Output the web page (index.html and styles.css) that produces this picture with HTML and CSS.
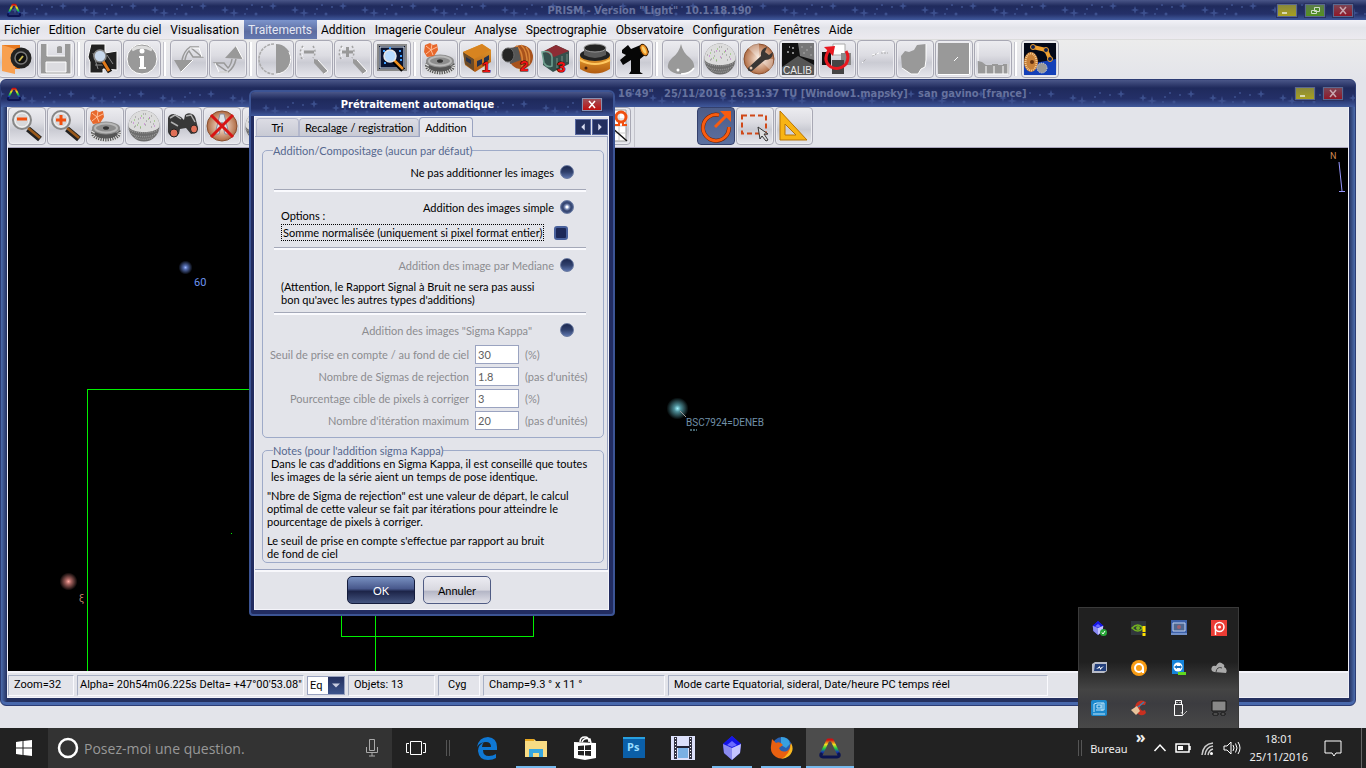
FILE: index.html
```html
<!DOCTYPE html>
<html lang="fr">
<head>
    <meta charset="UTF-8">
    <meta name="viewport" content="width=device-width, initial-scale=1.0">
    <title>PRISM</title>
    <link rel="stylesheet" href="styles.css">
</head>
<body>
    <!-- Symboles partagés -->
    <svg class="symbols" aria-hidden="true">
        <defs>
            <linearGradient id="rainbow" x1="0" y1="0" x2="0" y2="1">
                <stop offset="0" stop-color="#d01010"/><stop offset=".3" stop-color="#f0e020"/>
                <stop offset=".55" stop-color="#20d040"/><stop offset=".8" stop-color="#1838b0"/>
                <stop offset="1" stop-color="#0c1450"/>
            </linearGradient>
            <linearGradient id="orange" x1="0" y1="0" x2="0" y2="1">
                <stop offset="0" stop-color="#e8a030"/><stop offset="1" stop-color="#b05a10"/>
            </linearGradient>
            <radialGradient id="copper">
                <stop offset="0" stop-color="#fff0e4"/><stop offset="1" stop-color="#b06c44"/>
            </radialGradient>
            <radialGradient id="starBlue">
                <stop offset="0" stop-color="#9ab4ff"/><stop offset=".3" stop-color="#5068a8"/><stop offset="1" stop-color="#000"/>
            </radialGradient>
            <radialGradient id="starRed">
                <stop offset="0" stop-color="#ffa8a0"/><stop offset=".3" stop-color="#a86460"/><stop offset="1" stop-color="#000"/>
            </radialGradient>
            <radialGradient id="starCyan">
                <stop offset="0" stop-color="#a0f4ff"/><stop offset=".3" stop-color="#4c8c96"/><stop offset="1" stop-color="#000"/>
            </radialGradient>
        </defs>
        <symbol id="prism" viewBox="0 0 24 24">
            <path d="M3 19L10 4h4l7 15" fill="none" stroke="url(#rainbow)" stroke-width="3" stroke-linejoin="round"/>
            <path d="M3 18q-1 3 2 3h14q3 0 2-3" fill="none" stroke="#0c1450" stroke-width="3" stroke-linecap="round"/>
        </symbol>
        <symbol id="sphere" viewBox="0 0 32 32">
            <circle cx="16" cy="16" r="15.500" fill="#6c6c6c"/>
            <path d="M.5 16a15.500 15.500 0 0 1 31 0c-2 8-29 8-31 0z" fill="#dcdcdc"/>
            <path d="M3 12h1m3-5h1m2 6h1m4-9h1m2 7h1m4-5h1m1 8h1m-9 1h1m-12 2h1m5 1h1m10-1h1M7 16h1m7-8h1m-6 1h1m11 3h1m-6-8h1m3 4h1" stroke="#888"/>
            <path d="M6 10h1m5 7h1m7-8h1m5 2h1M13 6h1m-5 9h1" stroke="#7ac050"/>
            <path d="M16 14h1m4-6h1m4 8h1M5 13h1m6-5h1" stroke="#c060d0"/>
            <path d="M1 19c4 5 26 5 30 0M3 23c5 5 21 5 26 0M7 27c4 3 14 3 18 0" fill="none" stroke="#999" stroke-width="1.500" stroke-dasharray="1 1"/>
        </symbol>
        <symbol id="gears" viewBox="0 0 32 32">
            <ellipse cx="17" cy="23" rx="15" ry="8.500" fill="#555"/>
            <ellipse cx="17" cy="24" rx="13.500" ry="6.500" fill="none" stroke="#ddd" stroke-width="4" stroke-dasharray="1.200 1.200"/>
            <ellipse cx="17" cy="18" rx="14" ry="6.500" fill="#8c8c8c"/>
            <ellipse cx="17" cy="18" rx="11" ry="4.500" fill="none" stroke="#b8b8b8" stroke-width="2"/>
            <ellipse cx="17" cy="18" rx="3" ry="1.800" fill="#333"/>
            <path d="M2 2l5-2 3 2 4-1 1 6-4 6-7 1-3-5z" fill="#e8682c"/>
            <path d="M8 7L3 3m5 4l1-6m-1 6l6-3M8 7l-5 4m5-4l2 5" stroke="#ffc09a" fill="none"/>
        </symbol>
        <symbol id="handle" viewBox="0 0 32 32">
            <path d="M17 19l12 10" stroke="#222" stroke-width="6"/>
            <path d="M17 18l12 10" stroke="#9a5a1c" stroke-width="2.500"/>
            <circle cx="11" cy="10" r="9" fill="#d8d8da" stroke="#888" stroke-width="2"/>
            <circle cx="11" cy="10" r="7" fill="none" stroke="#f6f6f6" stroke-width="1"/>
        </symbol>
        <symbol id="ghostglass" viewBox="0 0 32 32">
            <path d="M16 16l4 1 10 11-4 3-10-11z" fill="#999"/>
            <path d="M20 17l10 11-4 3" fill="none" stroke="#fff"/>
            <path d="M5 3Q0 9 4 16M15 3q4 6 0 12" fill="none" stroke="#a4a4a4" stroke-width="1.500" stroke-dasharray="2 2"/>
            <path d="M6 4Q2 9 6 16" fill="none" stroke="#fff" stroke-dasharray="2 2"/>
        </symbol>
        <symbol id="cube" viewBox="0 0 24 24">
            <path d="M12 0l9 8-1 9-8 7-8-7-1-9z" fill="#3030d8"/>
            <path d="M12 0l9 8-9 4-9-4z" fill="#1414e8"/>
            <path d="M3 8l9 4v12l-8-7z" fill="#8c8cf0"/>
            <path d="M21 8l-9 4v12l8-7z" fill="#c4c4ff"/>
            <path d="M12 5l5 4-5 2-5-2z" fill="#6a6aff"/>
        </symbol>
    </svg>

    <!-- Barre de titre -->
    <header class="titlebar app-title">
        <svg class="app-icon"><use href="#prism"/></svg>
        <span class="title-text">PRISM - Version "Light" &nbsp;10.1.18.190</span>
        <div class="win-buttons">
            <button class="win-btn yellow" aria-label="Réduire"><svg viewBox="0 0 18 11"><path d="M4 8h5" stroke="#d8d8b0" stroke-width="2"/></svg></button>
            <button class="win-btn green" aria-label="Restaurer"><svg viewBox="0 0 18 11"><path d="M8.500 2.500h5v4h-5zM5.500 5.500h5v3h-5z" fill="#4c8a2a" stroke="#d0dcc8"/></svg></button>
            <button class="win-btn red" aria-label="Fermer"><svg viewBox="0 0 18 11"><path d="M6 2l6 7M12 2l-6 7" stroke="#c8a8b0" stroke-width="1.500"/></svg></button>
        </div>
    </header>

    <!-- Menu -->
    <nav class="menu">
        <a href="#">Fichier</a>
        <a href="#">Edition</a>
        <a href="#">Carte du ciel</a>
        <a href="#">Visualisation</a>
        <a href="#" class="current">Traitements</a>
        <a href="#">Addition</a>
        <a href="#">Imagerie Couleur</a>
        <a href="#">Analyse</a>
        <a href="#">Spectrographie</a>
        <a href="#">Observatoire</a>
        <a href="#">Configuration</a>
        <a href="#">Fenêtres</a>
        <a href="#">Aide</a>
    </nav>

    <!-- Barre d'outils principale -->
    <div class="toolbar">
        <div class="group">
            <button class="tool" aria-label="Ouvrir"><svg viewBox="0 0 32 32"><path d="M1 2h18v24H1z" fill="#e87a20"/><path d="M1 2l13 4v25L1 28z" fill="#f8a050"/><circle cx="20" cy="15" r="10.500" fill="#222"/><circle cx="20" cy="15" r="6" fill="#111" stroke="#777" stroke-width="1.500"/><path d="M18 18l4-5" stroke="#c8b850" stroke-width="2"/></svg></button>
            <button class="tool" aria-label="Enregistrer"><svg viewBox="0 0 32 32"><path d="M1 1h6v12h18V1h6v30H1z" fill="#999"/><path d="M6 19h20v10H6z" fill="#dcdce0" stroke="#fff"/><path d="M17 4q3-2 5 0v6h-5z" fill="#999"/><path d="M7 1v12h18M31 1v30H1" fill="none" stroke="#fff"/></svg></button>
        </div>
        <div class="group">
            <button class="tool" aria-label="Chercher"><svg viewBox="0 0 32 32"><path d="M4 1h14v9l12-2v19l-14-1v4H3V19l-2-5z" fill="#222" stroke="#fff"/><path d="M6 10l5 16M20 12l6 9M8 22h9" stroke="#888"/><path d="M16 18l7 11" stroke="#111" stroke-width="5"/><path d="M16 18l6 10" stroke="#e07818" stroke-width="3"/><circle cx="13" cy="13" r="6" fill="#c8d8ec" stroke="#888" stroke-width="1.500"/></svg></button>
            <button class="tool" aria-label="Informations"><svg viewBox="0 0 32 32"><circle cx="16" cy="16" r="15" fill="#999" stroke="#fff"/><path d="M6 7q9-6 20 0" fill="none" stroke="#ddd" stroke-width="3"/><circle cx="16" cy="8" r="2.500" fill="#fff"/><path d="M13 13h5v11h2v2h-7v-2h1v-9h-1z" fill="#fff"/></svg></button>
        </div>
        <div class="group">
            <button class="tool" aria-label="Annuler"><svg viewBox="0 0 32 32"><path d="M1 17h19L8 29z" fill="#999"/><path d="M9 17q2-9 8-13l12 10h-9l-4-6q-3 3-4 9M17 4h9" fill="none" stroke="#999" stroke-width="1.500"/><path d="M20 17L8 29m9-24h9l3 9" fill="none" stroke="#fff"/></svg></button>
            <button class="tool" aria-label="Rétablir"><svg viewBox="0 0 32 32"><path d="M13 15L24 3l7 13z" fill="#999"/><path d="M24 16q-2 9-8 13L3 20h9l4 5q3-3 4-9M15 29H7" fill="none" stroke="#999" stroke-width="1.500"/><path d="M24 3l7 13M3 20l4 9h9" fill="none" stroke="#fff"/></svg></button>
        </div>
        <div class="group">
            <button class="tool" aria-label="Contraste"><svg viewBox="0 0 32 32"><path d="M17 1a15 15 0 0 1 0 30z" fill="#999"/><path d="M15 1a15 15 0 0 0 0 30" fill="none" stroke="#aaa" stroke-width="1.500" stroke-dasharray="3 1"/><path d="M17 31a15 15 0 0 0 13-22" fill="none" stroke="#fff"/></svg></button>
            <button class="tool" aria-label="Zoom arrière"><svg viewBox="0 0 32 32"><use href="#ghostglass"/><path d="M6 9h10" stroke="#999" stroke-width="3"/></svg></button>
            <button class="tool" aria-label="Zoom avant"><svg viewBox="0 0 32 32"><use href="#ghostglass"/><path d="M5 9h11M10.500 4v10" stroke="#999" stroke-width="3"/></svg></button>
            <button class="tool" aria-label="Zoom ciel"><svg viewBox="0 0 32 32"><path d="M2 2h28v25H2z" fill="#0a1430" stroke="#888" stroke-width="2"/><path d="M4 4h24v21H4z" fill="none" stroke="#dfe8f0"/><path d="M7 8h2m4-3h2m8 3h2m-1 5h2M8 20h2m14-3h2" stroke="#40a0ff" stroke-width="2"/><path d="M18 18l9 9" stroke="#000" stroke-width="5"/><path d="M18 17l9 9" stroke="#f09020" stroke-width="2.500"/><circle cx="14" cy="13" r="6" fill="#b8dcff" stroke="#e8e8e8" stroke-width="1.500"/></svg></button>
        </div>
        <div class="group">
            <button class="tool" aria-label="Prétraitement"><svg><use href="#gears"/></svg></button>
            <button class="tool" aria-label="Caméra 1"><svg viewBox="0 0 32 32"><path d="M1 9L20 1l9 6v12L13 29 3 22z" fill="url(#orange)"/><path d="M1 9l11 7v12L3 21z" fill="#6a4a28"/><path d="M1 9L20 1l9 6-17 9z" fill="#d88420"/><path d="M4 14l5 3v4l-5-3zM15 18l5-2v5l-5 3zM22 15l5-3v5l-5 3z" fill="#26324c"/><text x="20" y="29" class="cam-number">1</text></svg></button>
            <button class="tool" aria-label="Caméra 2"><svg viewBox="0 0 32 32"><circle cx="20" cy="14" r="12" fill="#a8521c"/><path d="M15 3q8 5 6 22M20 2q7 6 6 21M25 4q5 6 3 17" fill="none" stroke="#d88438" stroke-width="1.500"/><path d="M6 5l11-1 3 13-11 4z" fill="#555"/><ellipse cx="7" cy="12" rx="6" ry="7" fill="#252525" stroke="#686868"/><text x="19" y="28" class="cam-number">2</text></svg></button>
            <button class="tool" aria-label="Caméra 3"><svg viewBox="0 0 32 32"><path d="M3 9L16 2l13 6v13l-16 8-10-7z" fill="#34504c"/><path d="M4 8l12-6 13 6-15 6z" fill="#8c2c34"/><path d="M2 9q9-2 10 5v9q-5 2-8-3z" fill="none" stroke="#70a090" stroke-width="1.500"/><path d="M17 15v10m5-12v10m5-12v8" stroke="#7a9088"/><text x="17" y="29" class="cam-number">3</text></svg></button>
            <button class="tool" aria-label="Roue à filtres"><svg viewBox="0 0 32 32"><path d="M1 12h30v14q-15 9-30 0z" fill="url(#orange)"/><path d="M1 17q15 8 30 0" fill="none" stroke="#ffc860" stroke-width="2"/><ellipse cx="16" cy="12" rx="15" ry="6" fill="#222"/><path d="M5 4h22v8q-11 6-22 0z" fill="#5a5a5a"/><ellipse cx="16" cy="5" rx="11" ry="4" fill="#222" stroke="#999"/><circle cx="7" cy="25" r="1.500" fill="#421"/></svg></button>
            <button class="tool" aria-label="Télescope"><svg viewBox="0 0 32 32"><path d="M4 7l6-5 3 4 12-5 6 8-9 7v13l3 2H11l2-3V17l-8 5-3-5 6-5-4-2z" fill="#060606"/><ellipse cx="26" cy="7" rx="3.500" ry="6" transform="rotate(-25 26 7)" fill="#f09020" stroke="#3c2000"/><ellipse cx="26" cy="7" rx="1.500" ry="4" transform="rotate(-25 26 7)" fill="#f8d070"/></svg></button>
        </div>
        <div class="group">
            <button class="tool" aria-label="Goutte"><svg viewBox="0 0 32 32"><path d="M16 1q2 9 9 14 5 5 4 10-4 6-13 6T3 25q-1-5 4-10 7-5 9-14z" fill="#999"/><path d="M29 25q-4 6-13 6" fill="none" stroke="#fff" stroke-width="1.500"/><circle cx="13" cy="27" r="1.500" fill="#fff"/></svg></button>
            <button class="tool" aria-label="Sphère"><svg><use href="#sphere"/></svg></button>
            <button class="tool" aria-label="Réglages"><svg viewBox="0 0 32 32"><circle cx="16" cy="16" r="15" fill="url(#copper)" stroke="#8a5030"/><path d="M16 16L4 4q6-5 12-3zM16 16l11 11q4-5 3-11z" fill="#fff" opacity=".35"/><path d="M5 25l13-12q-1-7 6-9l-2 5 4 3 4-3q0 8-8 8L9 28q-5 1-4-3z" fill="#3a3634"/><circle cx="8" cy="25" r="1.500" fill="#e8c8b0"/></svg></button>
            <button class="tool" aria-label="Calibration"><svg viewBox="0 0 32 32"><path d="M0 0h32v32H0z" fill="#111"/><path d="M16 0h16v17L18 13z" fill="#777"/><path d="M16 13L0 24v8h32V22z" fill="#555"/><path d="M5 9h2m3-4h2m-5-1h1m2 6h2" stroke="#fff"/><path d="M19 4h2m3 3h2m2-3h2m-9 6h2m5 2h2" stroke="#aaa"/><text x="1" y="31" class="calib">CALIB</text></svg></button>
            <button class="tool" aria-label="Rotation"><svg viewBox="0 0 32 32"><path d="M12 1h12v11H12z" fill="#fff" stroke="#aaa"/><path d="M1 9h9v13H1z" fill="#111"/><path d="M20 10h10v12H20z" fill="#888"/><path d="M11 17h12v14H11z" fill="#444"/><path d="M8 7q-7 11 2 17 8 4 15-3 4-7 0-13" fill="none" stroke="#e81820" stroke-width="3"/><path d="M3 4l11-1-2 10z" fill="#e81820"/></svg></button>
            <button class="tool" aria-label="Courbe"><svg viewBox="0 0 32 32"><path d="M2 20l4-4m6-3l6-3m3 0h7" fill="none" stroke="#aaa" stroke-dasharray="2 1"/><path d="M2 19l1 1m9-8l7-2m3-1l3-1" stroke="#fff" stroke-dasharray="3 2"/></svg></button>
            <button class="tool" aria-label="Polygone"><svg viewBox="0 0 32 32"><path d="M2 13l4-5 4 1 5-2 3-5 9-1v16l-1 7-4 2-3 5h-7L3 25z" fill="#999"/><path d="M27 1v16l-1 7-4 2-3 5h-7L3 25" fill="none" stroke="#fff"/></svg></button>
            <button class="tool" aria-label="Champ"><svg viewBox="0 0 32 32"><path d="M0 0h32v32H0z" fill="#999"/><path d="M31.500 0v31.500H0" fill="none" stroke="#fff"/><path d="M16 18l4-4" stroke="#fff"/></svg></button>
            <button class="tool" aria-label="Histogramme"><svg viewBox="0 0 32 32"><path d="M1 31V18l4 1 4 3h6v-1h6v1h5v-1h6v10z" fill="#999"/><path d="M1 0v18M31 21v10H1M9 23v8m8-8v8m9-8v8" fill="none" stroke="#fff"/></svg></button>
        </div>
        <div class="group">
            <button class="tool" aria-label="Automatisation"><svg viewBox="0 0 32 32"><path d="M0 0h32v32H0z" fill="#030818"/><path d="M0 32V22l32-6v16z" fill="#1440b8"/><path d="M9 4l13 3 4 9" fill="none" stroke="#f0a030" stroke-width="4"/><circle cx="9" cy="4" r="2.500" fill="#102050" stroke="#f0a030"/><circle cx="22" cy="7" r="2.500" fill="#102050" stroke="#f0a030"/><circle cx="26" cy="16" r="2.500" fill="#102050" stroke="#f0a030"/><ellipse cx="7" cy="19" rx="7" ry="10" fill="#c88038"/><ellipse cx="7" cy="19" rx="5.500" ry="8.500" fill="none" stroke="#f4c890" stroke-width="2" stroke-dasharray="1 1"/><circle cx="8" cy="19" r="2" fill="#603010"/><circle cx="18" cy="25" r="5" fill="#999" stroke="#ddd" stroke-dasharray="1 1"/></svg></button>
        </div>
    </div>

    <main class="desktop">
        <!-- Fenêtre de la carte du ciel -->
        <section class="map-window">
            <div class="titlebar map-title">
                <svg class="app-icon"><use href="#prism"/></svg>
                <span class="title-text">16'49" &nbsp; 25/11/2016 16:31:37 TU [Window1.mapsky] &nbsp; san gavino [france]</span>
                <div class="win-buttons">
                    <button class="win-btn yellow" aria-label="Réduire"><svg viewBox="0 0 18 11"><path d="M4 8h5" stroke="#d8d8b0" stroke-width="2"/></svg></button>
                    <button class="win-btn red" aria-label="Fermer"><svg viewBox="0 0 18 11"><path d="M6 2l6 7M12 2l-6 7" stroke="#c8a8b0" stroke-width="1.500"/></svg></button>
                </div>
            </div>
            <div class="map-body">
                <div class="map-toolbar">
                    <div class="tools-left">
                        <button class="tool" aria-label="Zoom arrière"><svg viewBox="0 0 32 32"><use href="#handle"/><path d="M6 9h10" stroke="#f05010" stroke-width="3"/></svg></button>
                        <button class="tool" aria-label="Zoom avant"><svg viewBox="0 0 32 32"><use href="#handle"/><path d="M6 10h10M11 5v10" stroke="#f05010" stroke-width="3"/></svg></button>
                        <button class="tool" aria-label="Engrenages"><svg><use href="#gears"/></svg></button>
                        <button class="tool" aria-label="Sphère céleste"><svg><use href="#sphere"/></svg></button>
                        <button class="tool" aria-label="Recherche"><svg viewBox="0 0 32 32"><path d="M1 8q1-4 6-4l7 3 3 3 1-5q3-3 7-1 3 1 4 6l2 8-2 5-5 1-5-6-6 1-1 5-5 3q-5-1-6-5z" fill="#383838"/><path d="M3 8l5-3 6 4m5-3l5-1 4 7M4 12l7 4" fill="none" stroke="#b0b0b0" stroke-width="1.500"/><ellipse cx="7" cy="23" rx="4" ry="4" fill="#e07058" stroke="#222"/><ellipse cx="27" cy="19" rx="3.500" ry="4" fill="#e07058" stroke="#222"/></svg></button>
                        <button class="tool" aria-label="Désactiver"><svg viewBox="0 0 32 32"><circle cx="16" cy="16" r="15" fill="url(#copper)" stroke="#8a5030"/><path d="M14 4h4l5 20h-4l-3-12-3 12H9z" fill="#dce4e8" stroke="#889"/><path d="M5 5l22 22M27 5L5 27" stroke="#d81414" stroke-width="3"/></svg></button>
                        <button class="tool" aria-label="Objets"><svg><use href="#sphere"/></svg></button>
                    </div>
                    <div class="tools-grid">
                        <button class="tool" aria-label="Grille"><svg viewBox="0 0 32 32"><path d="M2 0h28v31H2z" fill="#fff" stroke="#999"/><path d="M2 9h28M2 16h28M2 23h28M9 1v30M16 1v30M23 1v30" stroke="#ccc"/><circle cx="25" cy="7" r="5" fill="none" stroke="#f05010" stroke-width="3"/><path d="M19 15h4v-3m8 3h-4v-3" fill="none" stroke="#f05010" stroke-width="2"/><path d="M15 17l16 14" stroke="#111" stroke-width="1.500"/></svg></button>
                    </div>
                    <div class="tools-right">
                        <button class="tool pressed" aria-label="Tourner"><svg viewBox="0 0 32 32"><path d="M19 5a13 13 0 1 0 10 12" fill="none" stroke="#702000" stroke-width="4"/><path d="M19 5a13 13 0 1 0 10 12" fill="none" stroke="#f85c10" stroke-width="3"/><path d="M15 17L27 5" stroke="#f85c10" stroke-width="3"/><path d="M20 1h11v11z" fill="#f85c10"/></svg></button>
                        <button class="tool" aria-label="Sélection"><svg viewBox="0 0 32 32"><path d="M3 5.500h24v18H3z" fill="none" stroke="#d04818" stroke-width="2" stroke-dasharray="5 3"/><path d="M19 17l10 7h-4l4 6-2 1-4-5-2 3z" fill="#ddd" stroke="#333"/></svg></button>
                        <button class="tool" aria-label="Équerre"><svg viewBox="0 0 32 32"><path d="M2 1v29h27zM7 14l11 11H7z" fill="#f8b414" fill-rule="evenodd" stroke="#b87404"/></svg></button>
                    </div>
                </div>
                <div class="sky">
                    <svg class="sky-chart">
                        <g stroke="#00f000" fill="none" shape-rendering="crispEdges">
                            <path d="M79.500 600V241.500H367.500V600"/>
                            <path d="M333.500 400V488.500H525.500V400"/>
                            <path d="M223 385.500h1"/>
                        </g>
                        <circle cx="177.500" cy="119.500" r="7" fill="url(#starBlue)"/>
                        <text x="186" y="138" class="star-name blue">60</text>
                        <circle cx="60.500" cy="433.500" r="9" fill="url(#starRed)"/>
                        <text x="71" y="454" class="star-name greek">ξ</text>
                        <circle cx="669.500" cy="260.500" r="11" fill="url(#starCyan)"/>
                        <path d="M672 263l6 6" stroke="#999"/>
                        <path d="M682 282h7" stroke="#8ac8dc" stroke-dasharray="2 1"/>
                        <text x="678" y="278" class="star-name deneb">BSC7924=DENEB</text>
                        <svg x="100%" overflow="visible">
                            <text x="-18" y="11" class="star-name north">N</text>
                            <path d="M-9 14l3 29M-9 43.500h6" stroke="#9898ff" fill="none"/>
                        </svg>
                    </svg>
                </div>
                <div class="status">
                    <span class="cell zoom">Zoom=32</span>
                    <span class="cell coords">Alpha= 20h54m06.225s Delta= +47°00'53.08"</span>
                    <div class="combo">
                        <select aria-label="Repère"><option>Eq</option></select>
                        <svg viewBox="0 0 16 16"><path d="M4 6h8l-4 4z" fill="#c8cce0"/></svg>
                    </div>
                    <span class="cell objects">Objets: 13</span>
                    <span class="cell constellation">Cyg</span>
                    <span class="cell field">Champ=9.3 ° x 11 °</span>
                    <span class="cell mode">Mode carte Equatorial, sideral, Date/heure PC temps réel</span>
                </div>
            </div>
        </section>

        <!-- Boîte de dialogue -->
        <section class="dialog" role="dialog" aria-labelledby="dialogTitle">
            <div class="titlebar dialog-title">
                <h1 id="dialogTitle">Prétraitement automatique</h1>
                <button class="win-btn red bright" aria-label="Fermer"><svg viewBox="0 0 18 11"><path d="M6 2l6 7M12 2l-6 7" stroke="#fff" stroke-width="1.500"/></svg></button>
            </div>
            <form class="dialog-body">
                <div class="tabs">
                    <button type="button" class="tab tab-tri">Tri</button>
                    <button type="button" class="tab">Recalage / registration</button>
                    <button type="button" class="tab active">Addition</button>
                    <div class="tab-arrows">
                        <button type="button" aria-label="Onglet précédent"><svg viewBox="0 0 16 16"><path d="M10 4v8L6 8z" fill="#d8dcf0"/></svg></button>
                        <button type="button" aria-label="Onglet suivant"><svg viewBox="0 0 16 16"><path d="M6 4v8l4-4z" fill="#d8dcf0"/></svg></button>
                    </div>
                </div>
                <div class="panel">
                    <fieldset>
                        <legend>Addition/Compositage (aucun par défaut)</legend>
                        <div class="section first">
                            <div class="choice"><label for="none">Ne pas additionner les images</label><input type="radio" name="mode" id="none"></div>
                        </div>
                        <div class="section">
                            <div class="simple-row">
                                <span class="options">Options :</span>
                                <div class="choice"><label for="simple">Addition des images simple</label><input type="radio" name="mode" id="simple" checked></div>
                            </div>
                            <div class="check-row"><label for="normalise">Somme normalisée (uniquement si pixel format entier)</label><input type="checkbox" id="normalise"></div>
                        </div>
                        <div class="section">
                            <div class="choice off"><label for="median">Addition des image par Mediane</label><input type="radio" name="mode" id="median"></div>
                            <p class="warning">(Attention, le Rapport Signal à Bruit ne sera pas aussi<br>bon qu'avec les autres types d'additions)</p>
                        </div>
                        <div class="section">
                            <div class="choice off sigma"><label for="sigma">Addition des images "Sigma Kappa"</label><input type="radio" name="mode" id="sigma"></div>
                            <div class="params">
                                <label for="seuil">Seuil de prise en compte / au fond de ciel</label><input type="text" id="seuil" value="30" disabled><span>(%)</span>
                                <label for="sigmas">Nombre de Sigmas de rejection</label><input type="text" id="sigmas" value="1.8" disabled><span>(pas d'unités)</span>
                                <label for="cible">Pourcentage cible de pixels à corriger</label><input type="text" id="cible" value="3" disabled><span>(%)</span>
                                <label for="iterations">Nombre d'itération maximum</label><input type="text" id="iterations" value="20" disabled><span>(pas d'unités)</span>
                            </div>
                        </div>
                    </fieldset>
                    <fieldset class="notes">
                        <legend>Notes (pour l'addition sigma Kappa)</legend>
                        <p class="indent">Dans le cas d'additions en Sigma Kappa, il est conseillé que toutes<br>les images de la série aient un temps de pose identique.</p>
                        <p>"Nbre de Sigma de rejection" est une valeur de départ, le calcul<br>optimal de cette valeur se fait par itérations pour atteindre le<br>pourcentage de pixels à corriger.</p>
                        <p>Le seuil de prise en compte s'effectue par rapport au bruit<br>de fond de ciel</p>
                    </fieldset>
                </div>
                <div class="actions">
                    <button type="button" class="action primary">OK</button>
                    <button type="button" class="action">Annuler</button>
                </div>
            </form>
        </section>
    </main>

    <!-- Barre des tâches -->
    <footer class="taskbar">
        <button class="start" aria-label="Démarrer"><svg viewBox="0 0 16 16"><path d="M0 2l6.500-1v6.500H0zM7.500 1L16 0v7.500H7.500zM0 8.500h6.500V15L0 14zM7.500 8.500H16V16l-8.500-1z" fill="#fff"/></svg></button>
        <div class="search">
            <svg viewBox="0 0 22 22" class="cortana"><circle cx="11" cy="11" r="9" fill="none" stroke="#fff" stroke-width="2.500"/></svg>
            <input type="text" aria-label="Recherche" placeholder="Posez-moi une question.">
            <svg viewBox="0 0 12 18" class="mic"><path d="M3.500.5h5v11h-5zM.5 8v5.500h11V8M6 14v3M3 17h6" fill="none" stroke="#aaa"/></svg>
        </div>
        <button class="task taskview" aria-label="Vue des tâches"><svg viewBox="0 0 20 16"><path d="M4.500 1.500h11v13h-11zM3 3.500H.5v9H3M17 3.500h2.500v9H17" fill="none" stroke="#fff"/></svg></button>
        <span class="grip"></span>
        <div class="tasks">
            <button class="task" aria-label="Edge"><svg viewBox="0 0 24 24"><path d="M2 11Q4 1 13 1q9 1 9 10v3H8q0 6 6 6 4 0 7-2v4q-3 2-8 2-9 0-10-9 0-6 6-9-2 2-2 5h9q0-5-5-5-6 0-9 5z" fill="#0f78d4"/></svg></button>
            <button class="task open" aria-label="Explorateur"><svg viewBox="0 0 24 24"><path d="M1 3h9l2 2h11v16H1z" fill="#f8dc84"/><path d="M1 3h9v2H1z" fill="#e8a820"/><path d="M5 21v-8h14v8h-4v-4H9v4z" fill="#38a8e0"/></svg></button>
            <button class="task" aria-label="Store"><svg viewBox="0 0 24 24"><path d="M1 6l22 1v15l-11 2-11-2z" fill="#fff"/><path d="M7 6q0-5 5-5 4 0 4 5M9 6q2-5 8-3l1 4" fill="none" stroke="#fff" stroke-width="1.500"/><path d="M5 10l6-.5V14H5zm7-.5l6-.5v5h-6zM5 15h6v4.500L5 19zm7 0h6v5l-6-.5z" fill="#222"/></svg></button>
            <button class="task" aria-label="Photoshop"><svg viewBox="0 0 24 24"><path d="M1 1h22v21H1z" fill="#0b5fa8"/><path d="M1 1h22v2H1z" fill="#28a0e0"/><text x="5" y="15" class="ps">Ps</text></svg></button>
            <button class="task" aria-label="Film"><svg viewBox="0 0 24 24"><path d="M0 0h24v24H0z" fill="#dce0fa"/><path d="M3 1h3v22H3zm15 0h3v22h-3z" fill="#334"/><path d="M4.500 2v21M19.500 2v21" stroke="#fff" stroke-dasharray="1 2"/><path d="M7 12h10v10H7z" fill="#7ab0e4"/><path d="M6 11h12" stroke="#223" stroke-width="2"/></svg></button>
            <button class="task open" aria-label="Cube"><svg><use href="#cube"/></svg></button>
            <button class="task open" aria-label="Firefox"><svg viewBox="0 0 24 24"><circle cx="13" cy="11" r="10" fill="#2860b0"/><path d="M12 1q8 0 9 7l-4 4-5-3z" fill="#38a0e0"/><path d="M3 3l4 4q4-2 7 2l-4 3q2 5 8 3 4-3 3-8 4 7-1 12-6 6-13 2-6-4-5-11z" fill="#e86010"/><path d="M22 7q4 7-2 13-4 3-8 3 9-4 10-16z" fill="#f8b820"/></svg></button>
            <button class="task active" aria-label="PRISM"><svg><use href="#prism"/></svg></button>
        </div>
        <div class="systray">
            <span class="grip"></span>
            <a href="#" class="bureau">Bureau</a>
            <span class="chevrons">»</span>
            <button aria-label="Icônes cachées"><svg width="14" height="16" viewBox="0 0 14 16"><path d="M1.500 11L7 5l5.500 6" fill="none" stroke="#fff" stroke-width="1.500"/></svg></button>
            <button aria-label="Batterie"><svg width="16" height="16" viewBox="0 0 16 16"><path d="M1 4h13v8H1zM15 6v4" fill="none" stroke="#fff" stroke-width="1.500"/><path d="M3 6h5v4H3z" fill="#fff"/></svg></button>
            <button aria-label="Wi-Fi"><svg width="16" height="16" viewBox="0 0 16 16"><path d="M3 15Q4 4 14 3M6 15q1-8 8-9M9 15q1-5 5-6" fill="none" stroke="#ccc" stroke-width="1.500"/><circle cx="12.500" cy="13.500" r="1.500" fill="#fff"/></svg></button>
            <button aria-label="Volume"><svg width="18" height="16" viewBox="0 0 18 16"><path d="M1 6h3l4-4v12l-4-4H1zM10 5q2 3 0 6M12.500 3.500q3 4.500 0 9M15 2q4 6 0 12" fill="none" stroke="#fff"/></svg></button>
            <div class="clock"><span>18:01</span><span>25/11/2016</span></div>
            <button class="notif" aria-label="Notifications"><svg width="18" height="18" viewBox="0 0 18 18"><path d="M1 2h16v12h-5l-2 3-2-3H1z" fill="none" stroke="#fff"/></svg></button>
            <span class="show-desktop"></span>
        </div>

        <!-- Icônes cachées -->
        <div class="tray-popup">
            <svg viewBox="0 0 16 16"><use href="#cube" width="14" height="16"/><circle cx="12.500" cy="12.500" r="3.500" fill="#28a838"/><path d="M11 12.500l1 1.500 2-3" fill="none" stroke="#fff"/></svg>
            <svg viewBox="0 0 16 16"><path d="M0 1h15v14H0z" fill="#30363c"/><path d="M1 8q6-6 11 0-5 6-11 0z" fill="none" stroke="#70b020" stroke-width="1.500"/><circle cx="7" cy="8" r="2" fill="#70b020"/><path d="M13 6v6m0 1v3" stroke="#ffe000" stroke-width="3"/></svg>
            <svg viewBox="0 0 16 16"><path d="M0 0h16v15H0z" fill="#3c60a8"/><path d="M2 3h12v8H2z" fill="#506890" stroke="#c0d0f0"/><circle cx="8" cy="7" r="2" fill="#a06070"/><path d="M0 14h16" stroke="#a8c0e8"/></svg>
            <svg viewBox="0 0 16 16"><path d="M0 0h16v16H0z" fill="#ec3c34"/><circle cx="8.500" cy="7" r="4.500" fill="none" stroke="#fff" stroke-width="1.500"/><circle cx="8.500" cy="7" r="1.500" fill="#fff"/><path d="M4.500 6v9" stroke="#fff" stroke-width="1.500"/></svg>
            <svg viewBox="0 0 16 16"><path d="M4 2h12v9l-3 2H1V4z" fill="#b8bcc8"/><path d="M4 4h11v7H3z" fill="#24407c"/><path d="M5 9l4-3v2l4-2-4 4V8z" fill="#fff"/></svg>
            <svg viewBox="0 0 16 16"><circle cx="8" cy="8" r="8" fill="#f89c14"/><circle cx="8" cy="8" r="4" fill="none" stroke="#fff" stroke-width="2"/><path d="M12 8v5" stroke="#fff" stroke-width="2"/></svg>
            <svg viewBox="0 0 16 16"><path d="M1 0h12v14H1z" fill="#1484dc"/><circle cx="7" cy="7" r="4.500" fill="#fff"/><path d="M3 7l3-2v1h3V5l2 2-2 2V8H6v1z" fill="#1470c0"/><path d="M7 12h8v3H7z" fill="#60d820"/></svg>
            <svg viewBox="0 0 16 16"><path d="M3 12q-4-1-2-5 1-2 4-1 3-6 7-2 2 1 1 3 4 2 2 6z" fill="#aaa"/><path d="M5 12q1-6 6-4" fill="none" stroke="#444"/></svg>
            <svg viewBox="0 0 16 16"><rect width="16" height="16" rx="2" fill="#1c88cc"/><path d="M3 12V4l3-1h7v7H5M6 5h4v3H6zM2 14h12M11 3v8" fill="none" stroke="#c0e4f8"/></svg>
            <svg viewBox="0 0 16 16"><path d="M15 2q-6-4-10 2-3 6 2 10 5 3 8-1l-1-3q-4 2-5-2 0-4 5-3z" fill="#c83020"/><path d="M0 10l6-4 3 5-4 4z" fill="#e8c49c"/><path d="M7 7l6-5" stroke="#3880b0" stroke-width="1.500"/></svg>
            <svg viewBox="0 0 16 16"><path d="M4.500.5h6v4h-6zM3.500 4.500h8v11h-8zM6 2v1m3-1v1" fill="none" stroke="#fff"/><path d="M10 12l2 3 4-4" fill="none" stroke="#bbb"/></svg>
            <svg viewBox="0 0 16 16"><path d="M1 1h14v10H1z" fill="#888" stroke="#111"/><path d="M2 13h5v2H2zm8 0h4v2h-4z" fill="#888" stroke="#111"/></svg>
        </div>
    </footer>
</body>
</html>
```
FILE: styles.css
```css
/* Style général */
* {
    box-sizing: border-box;
}

body {
    margin: 0;
    height: 100vh;
    display: flex;
    flex-direction: column;
    overflow: hidden;
    background-color: #e3e4ea;
    font-family: Lato, "Liberation Sans", sans-serif;
    font-size: 11px;
    color: #000;
}

button,
input,
select {
    font: inherit;
    margin: 0;
}

button {
    padding: 0;
    border: none;
    background: none;
}

svg {
    display: block;
}

.symbols {
    position: absolute;
    width: 0;
    height: 0;
}

/* Barres de titre étoilées */
.titlebar {
    display: flex;
    align-items: center;
    font-family: "DejaVu Sans Condensed", "DejaVu Sans", sans-serif;
    font-weight: bold;
    color: #66729e;
    background-color: #232e62;
    background-image: url("data:image/svg+xml,%3Csvg xmlns='http://www.w3.org/2000/svg' width='70' height='28'%3E%3Cg fill='%233c508e'%3E%3Cpath d='M15 6l1 3 3 1-3 1-1 3-1-3-3-1 3-1zM24 8l1 4 4 1-4 1-1 4-1-4-4-1 4-1zM63 2l1 3 3 1-3 1-1 3-1-3-3-1 3-1z'/%3E%3Ccircle cx='42' cy='5' r='1'/%3E%3Ccircle cx='37' cy='9' r='1'/%3E%3Ccircle cx='52' cy='7' r='1'/%3E%3Ccircle cx='46' cy='14' r='1.500'/%3E%3Ccircle cx='35' cy='14' r='1'/%3E%3C/g%3E%3C/svg%3E"), linear-gradient(#4a5688, #1f2a5c 30%, #243068 70%, #40599c);
}

.app-title {
    height: 20px;
    flex-shrink: 0;
    padding: 0 13px 0 6px;
}

.app-icon {
    width: 16px;
    height: 16px;
    flex-shrink: 0;
}

.title-text {
    flex: 1;
    text-align: center;
    white-space: nowrap;
}

.win-buttons {
    display: flex;
    gap: 8px;
}

.win-btn {
    width: 20px;
    height: 13px;
    border: 1px solid #5a6890;
    padding: 0;
    box-shadow: 0 0 0 1px #2a3260;
}

.win-btn svg {
    width: 18px;
    height: 11px;
}

.yellow {
    background: linear-gradient(#88883c, #a8a020);
}

.green {
    background: linear-gradient(#5c7c4c, #549020);
}

.red {
    background: linear-gradient(#7c4454, #901828);
}

.bright {
    background: linear-gradient(#a05058, #c01010);
    border-color: #8890b0;
}

/* Menu */
.menu {
    height: 20px;
    flex-shrink: 0;
    display: flex;
    background: linear-gradient(#f2f2f8, #e3e4ea 40%, #eceaf0);
    border-bottom: 1px solid #dcdcdc;
    font-family: Roboto, "Liberation Sans", sans-serif;
    font-size: 12px;
}

.menu a {
    padding: 0 5px 0 4px;
    line-height: 20px;
    color: #000;
    text-decoration: none;
    white-space: nowrap;
}

.menu .current {
    color: #e4e8f4;
    background: linear-gradient(#7c94cc, #5c6ca0 60%, #6478b0);
}

/* Barre d'outils */
.toolbar {
    height: 39px;
    flex-shrink: 0;
    display: flex;
    gap: 9px;
    margin-left: -2px;
    background: linear-gradient(#ececec, #e3e4ea);
}

.group,
.tools-left,
.tools-right {
    display: flex;
    gap: 1px;
}

.group {
    position: relative;
}

.group:not(:last-child)::after {
    content: "";
    position: absolute;
    right: -5px;
    top: 2px;
    width: 2px;
    height: 34px;
    border-left: 1px solid #c4c4cc;
    background-color: #fff;
}

.tool {
    width: 38px;
    height: 38px;
    flex-shrink: 0;
    border: 1px solid #a8a8b4;
    border-radius: 4px;
    padding: 2px;
    background: linear-gradient(#ececf0, #dcdce2 40%, #cacbd3 60%, #e6e6ec);
    box-shadow: inset 0 0 0 1px #ececf0;
}

.tool svg {
    width: 32px;
    height: 32px;
    overflow: visible;
}

.tool.pressed {
    background: linear-gradient(#4c5c88, #5c70a0);
    border-color: #34406c;
    box-shadow: none;
}

.cam-number {
    font: bold 15px "Liberation Sans", Arial, sans-serif;
    fill: #f01414;
    stroke: #300;
    stroke-width: 1px;
    paint-order: stroke;
}

.calib {
    font: 10px "Liberation Sans", Arial, sans-serif;
    fill: #e8e8e8;
}

/* Bureau de l'application */
.desktop {
    flex: 1;
    min-height: 0;
    position: relative;
    padding: 0 10px 22px 0;
}

/* Fenêtre de la carte */
.map-window {
    height: 100%;
    display: flex;
    flex-direction: column;
    border: 1px solid #2c3c74;
    border-radius: 6px;
    padding: 0 6px 7px;
    background: linear-gradient(90deg, #4c6cac, #24305f 6px, #24305f calc(100% - 6px), #4c6cac);
    box-shadow: inset 0 -3px #4868ac;
    overflow: hidden;
}

.map-title {
    height: 27px;
    flex-shrink: 0;
    margin: 0 -6px;
    padding: 0 12px 0 5px;
    background-position: 7px 8px, 0 0;
}

.map-title .title-text {
    text-align: left;
    padding-left: 596px;
}

.map-body {
    flex: 1;
    min-height: 0;
    display: flex;
    flex-direction: column;
    background-color: #e3e4ea;
    border: 1px solid #f0f0f8;
    border-top: none;
}

.map-toolbar {
    height: 41px;
    flex-shrink: 0;
    display: flex;
    border-bottom: 1px solid #a8a4bc;
}

.tools-grid {
    margin-left: 313px;
    padding-right: 3px;
    border-right: 1px solid #c4c4cc;
}

.tools-right {
    margin-left: 62px;
}

.sky {
    flex: 1;
    min-height: 0;
    background-color: #000;
    overflow: hidden;
}

.sky-chart {
    width: 100%;
    height: 100%;
}

.star-name {
    font: 10px Roboto, "Liberation Sans", sans-serif;
}

.blue {
    font-size: 11px;
    fill: #6c94f0;
}

.greek {
    fill: #c88c70;
}

.deneb {
    fill: #7090a8;
}

.north {
    font-size: 9px;
    fill: #d08850;
}

/* Barre d'état */
.status {
    height: 26px;
    flex-shrink: 0;
    display: flex;
    align-items: center;
    gap: 3px;
    border-top: 2px solid #f4f4fa;
    font-family: Roboto, "Liberation Sans", sans-serif;
    white-space: nowrap;
}

.cell {
    height: 21px;
    line-height: 18px;
    padding: 0 5px;
    border: 1px solid #a8b0c4;
    border-right-color: #fafafe;
    border-bottom-color: #fafafe;
}

.zoom {
    width: 66px;
}

.coords {
    width: 227px;
    padding: 0 2px;
}

.combo {
    position: relative;
    width: 38px;
    height: 19px;
}

.combo select {
    width: 38px;
    height: 19px;
    appearance: none;
    border: 1px solid #9aa3c0;
    background-color: #fff;
    padding: 0 2px;
    border-radius: 0;
}

.combo svg {
    position: absolute;
    right: 1px;
    top: 1px;
    width: 16px;
    height: 17px;
    background: linear-gradient(#24305f, #3c548c);
    pointer-events: none;
}

.objects {
    width: 87px;
}

.constellation {
    width: 42px;
    padding-left: 9px;
}

.field {
    width: 182px;
}

.mode {
    width: 380px;
}

/* Boîte de dialogue */
.dialog {
    position: absolute;
    left: 249px;
    top: 11px;
    width: 366px;
    display: flex;
    flex-direction: column;
    border: 2px solid #3c5494;
    border-radius: 6px 6px 4px 4px;
    padding: 0 4px 4px 3px;
    background-color: #222c60;
}

.dialog-title {
    height: 24px;
    margin: 0 -4px 0 -3px;
    padding: 0 11px 0 2px;
    border-radius: 4px 4px 0 0;
    background-position: 0 6px, 0 0;
}

.dialog-title h1 {
    flex: 1;
    margin: 0;
    font-size: 11px;
    text-align: center;
    color: #fff;
}

.dialog-body {
    background-color: #e3e4ea;
    border: 1px solid #f4f4fa;
}

.tabs {
    display: flex;
    align-items: flex-end;
    height: 20px;
    padding-left: 1px;
    border-bottom: 1px solid #9aa3c0;
}

.tab {
    height: 18px;
    padding: 0 5px;
    border: 1px solid #b4b8cc;
    border-bottom: none;
    border-radius: 4px 4px 0 0;
    background: linear-gradient(#dcdce4, #c8cad4);
}

.tab-tri {
    width: 43px;
}

.tab.active {
    height: 20px;
    margin-bottom: -1px;
    background: #e8e8ee;
    border-color: #9aa3c0;
}

.tab-arrows {
    display: flex;
    gap: 1px;
    margin-left: auto;
    margin-bottom: 1px;
}

.tab-arrows button {
    width: 16px;
    height: 16px;
    border: 1px solid #5868a0;
    background-color: #24305f;
}

.tab-arrows svg {
    width: 14px;
    height: 14px;
}

.panel {
    padding: 7px 3px 6px 7px;
    border-right: 1px solid #9aa3c0;
    border-bottom: 1px solid #9aa3c0;
}

fieldset {
    margin: 0;
    min-width: 0;
    padding: 0 17px 1px 11px;
    border: 1px solid #9eaac8;
    border-radius: 5px;
    line-height: 13px;
}

legend {
    height: 13px;
    padding: 0;
    margin-left: -1px;
    color: #56688f;
    white-space: nowrap;
}

.section {
    padding: 8px 0 6px;
}

.section.first {
    min-height: 32px;
}

.section + .section {
    border-top: 1px solid #a4a8b8;
    box-shadow: inset 0 2px #fafafe;
    padding-top: 10px;
}

.choice {
    flex: 1;
    height: 14px;
    display: flex;
    align-items: center;
    justify-content: flex-end;
    gap: 6px;
    padding-right: 12px;
}

.off {
    color: #8c8c90;
}

.sigma {
    gap: 28px;
}

input[type="radio"] {
    appearance: none;
    width: 14px;
    height: 14px;
    border: 1px solid #6878a0;
    border-radius: 50%;
    background: linear-gradient(#1c2850, #30406c 50%, #5c74ac);
}

input[type="radio"]:checked {
    background: radial-gradient(#fff 0 1px, #90a0c8 2px, #34446f 4px, #50689c);
}

input[type="checkbox"] {
    appearance: none;
    width: 14px;
    height: 14px;
    border: 2px solid #48609c;
    border-radius: 3px;
    background-color: #1c2858;
}

.simple-row {
    display: flex;
    align-items: flex-start;
    height: 22px;
    padding-left: 7px;
}

.options {
    align-self: flex-end;
}

.check-row {
    display: flex;
    align-items: center;
    gap: 10px;
    margin-top: 2px;
    padding-left: 7px;
}

.check-row label {
    border: 1px dotted #000;
    padding: 1px;
    white-space: nowrap;
}

p {
    margin: 0;
    white-space: nowrap;
}

.warning {
    margin-top: 8px;
    padding-left: 7px;
}

.params {
    display: grid;
    grid-template-columns: 201px 44px 1fr;
    column-gap: 6px;
    row-gap: 3px;
    align-items: center;
    margin-top: 8px;
    margin-left: -6px;
    color: #8c8c90;
    white-space: nowrap;
}

.params label {
    text-align: right;
}

.params input {
    width: 44px;
    height: 19px;
    padding: 0 2px;
    border: 1px solid #9aa3c0;
    background-color: #fff;
    color: #606060;
}

.notes {
    margin-top: 6px;
    padding: 0 4px 2px;
}

.notes legend {
    margin-left: 6px;
}

.notes p + p {
    margin-top: 6px;
}

.indent {
    padding-left: 4px;
}

.actions {
    display: flex;
    gap: 8px;
    padding: 4px 0 5px 92px;
    border-top: 2px solid #f8f8fc;
}

.action {
    width: 68px;
    height: 28px;
    border: 1px solid #505c84;
    border-radius: 5px;
    background: linear-gradient(#ececf2, #d8d8e0 50%, #b4b6c6 55%, #e0e0e8);
}

.action.primary {
    color: #fff;
    border-color: #141c3c;
    background: linear-gradient(#7890c0, #48588c 45%, #1c2448 55%, #44547f);
}

/* Barre des tâches */
.taskbar {
    position: relative;
    height: 40px;
    flex-shrink: 0;
    display: flex;
    align-items: center;
    background-color: #222;
    color: #eee;
}

.start {
    width: 48px;
    height: 40px;
}

.start svg {
    width: 16px;
    height: 16px;
    margin: 0 auto;
}

.search {
    width: 344px;
    height: 40px;
    display: flex;
    align-items: center;
    padding: 0 14px 0 9px;
    background-color: #333;
}

.cortana {
    width: 22px;
    height: 22px;
}

.search input {
    flex: 1;
    min-width: 0;
    border: none;
    background: none;
    padding: 0 5px;
    font-family: "Open Sans", "Noto Sans", sans-serif;
    font-size: 14px;
}

.search input::placeholder {
    color: #989898;
}

.mic {
    width: 12px;
    height: 18px;
}

.task {
    width: 48px;
    height: 40px;
    position: relative;
}

.task svg {
    width: 24px;
    height: 24px;
    margin: 0 auto;
}

.taskview svg {
    width: 20px;
    height: 16px;
}

.task.open::after,
.task.active::after {
    content: "";
    position: absolute;
    left: 4px;
    right: 4px;
    bottom: 0;
    height: 2px;
    background-color: #76b9ed;
}

.task.active {
    background-color: #4c4c4c;
}

.task.active::after {
    left: 0;
    right: 0;
}

.ps {
    font: bold 11px "Open Sans", sans-serif;
    fill: #98dcff;
}

.grip {
    width: 4px;
    height: 16px;
    margin-left: 6px;
    border-left: 1px solid #555;
    border-right: 1px solid #555;
}

.tasks {
    display: flex;
    gap: 1px;
    margin-left: 13px;
}

.systray {
    margin-left: auto;
    height: 40px;
    display: flex;
    align-items: center;
    gap: 8px;
    font-family: "Noto Sans", "Open Sans", sans-serif;
}

.bureau {
    color: #eee;
    text-decoration: none;
}

.chevrons {
    align-self: flex-start;
    font-size: 16px;
    font-weight: bold;
    line-height: 18px;
}

.clock {
    display: flex;
    flex-direction: column;
    align-items: center;
    line-height: 18px;
}

.notif {
    margin-left: 8px;
}

.show-desktop {
    width: 5px;
    height: 40px;
    margin-left: 11px;
    border-left: 1px solid #666;
}

/* Icônes cachées */
.tray-popup {
    position: absolute;
    right: 127px;
    bottom: 40px;
    width: 161px;
    height: 121px;
    display: grid;
    grid-template-columns: repeat(4, 40px);
    grid-template-rows: repeat(3, 40px);
    place-items: center;
    border: 1px solid #3a3a3a;
    border-bottom: none;
    background: linear-gradient(#202020 45%, #444 68%, #3c3c40 80%, #484848);
}

.tray-popup svg {
    width: 16px;
    height: 16px;
}
```
